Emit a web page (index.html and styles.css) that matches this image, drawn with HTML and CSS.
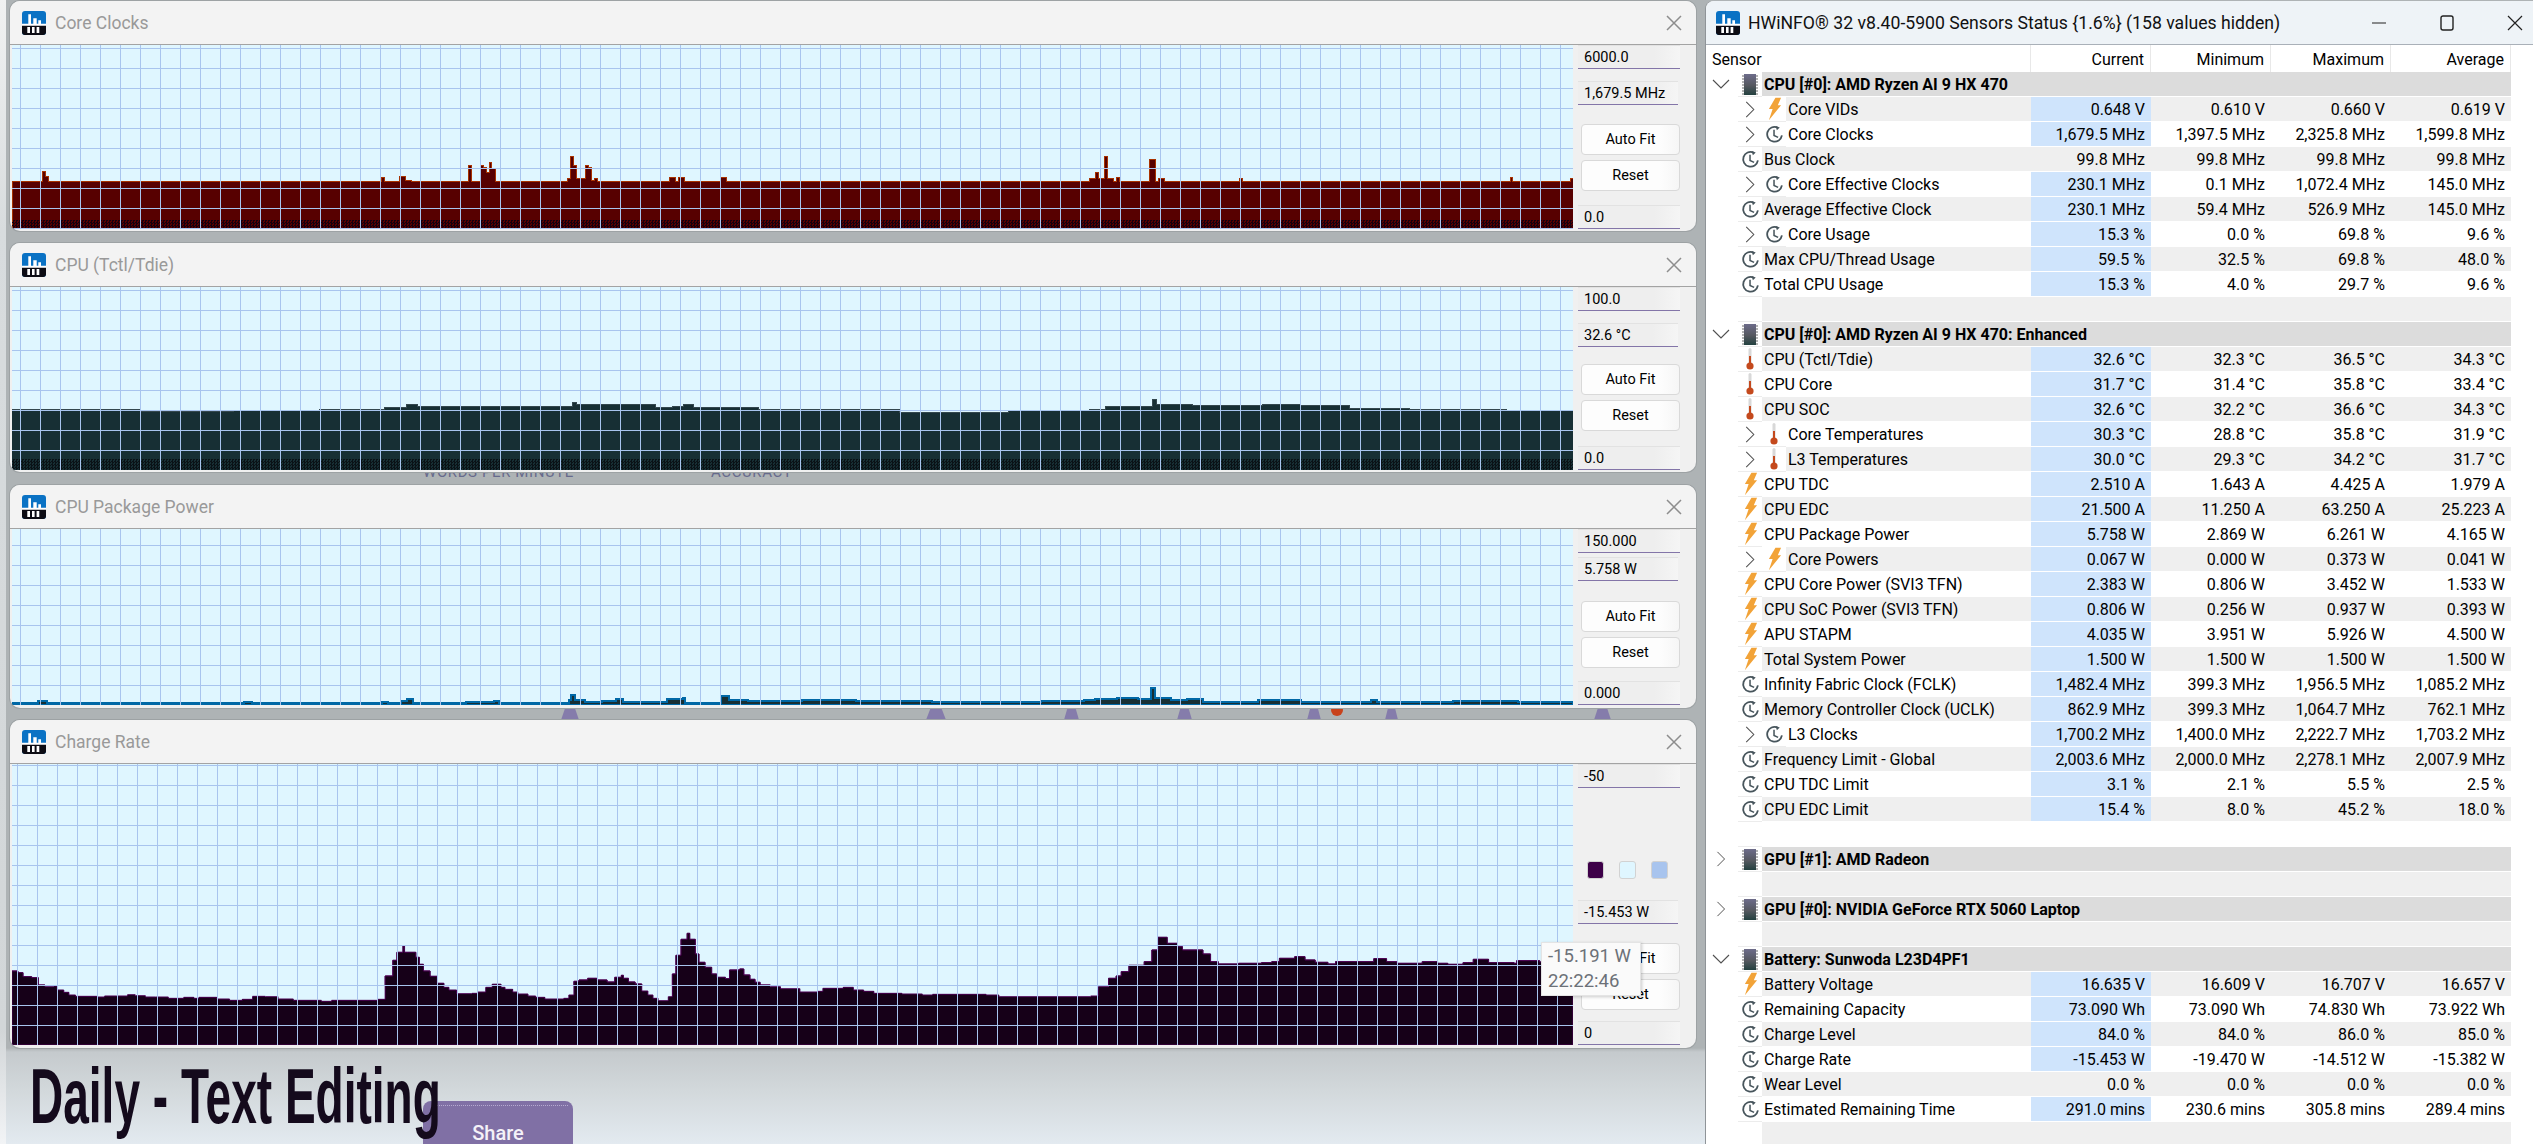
FILE: index.html
```html
<!DOCTYPE html>
<html lang="en">
<head>
    <meta charset="UTF-8">
    <meta name="viewport" content="width=device-width, initial-scale=1.0">
    <title>HWiNFO Sensors Status</title>
    <link rel="stylesheet" href="styles.css">
</head>
<body>
    <svg class="defs" width="0" height="0">
        <symbol id="logo" viewBox="0 0 24 24">
            <rect width="24" height="24" rx="3" fill="#0a72c4"/>
            <path d="M0 14h24v7a3 3 0 0 1-3 3H3a3 3 0 0 1-3-3z" fill="#0c0c14"/>
            <path d="M6.3 3.3H9v9.7H6.3zM11.3 7.3h3.4V13h-3.4zM16.3 9.3H19V13h-2.7zM0 12.7h24v2H0z" fill="#fff"/>
            <path d="M5.3 16H8v6H5.3zM10 16h2.6v6H10zM14.6 16h2.7v6h-2.7z" fill="#fff"/>
        </symbol>
        <symbol id="clock" viewBox="0 0 20 20">
            <path d="M13.2 2.6A7.8 7.8 0 1 0 17.8 11" fill="none" stroke="#47555c" stroke-width="1.9"/>
            <path d="M11.2 1l4.3 1.6-3 3z" fill="#47555c"/>
            <path d="M9.5 5v6l4.3 2" fill="none" stroke="#47555c" stroke-width="1.6"/>
        </symbol>
        <symbol id="bolt" viewBox="0 0 16 24">
            <path d="M9 0h6l-3.5 8H15L2 24l4-12H2z" fill="#f2a338"/>
        </symbol>
        <symbol id="therm" viewBox="0 0 8 22">
            <rect x="2.5" y="0" width="3" height="16" rx="1.5" fill="#d8d8d8"/>
            <rect x="3" y="8" width="2" height="9" fill="#c4491d"/>
            <circle cx="4" cy="18" r="3.6" fill="#c4491d"/>
        </symbol>
        <symbol id="chip" viewBox="0 0 16 21">
            <linearGradient id="chip-fill" x1="0" y1="0" x2="0" y2="1">
                <stop offset="0" stop-color="#6d6c8a"/>
                <stop offset=".55" stop-color="#55585f"/>
                <stop offset="1" stop-color="#23403f"/>
            </linearGradient>
            <path d="M0 2h16M0 5h16M0 8h16M0 11h16M0 14h16M0 17h16M0 20h16" stroke="#9a9a9a" stroke-width="1.4"/>
            <rect x="2" y="0" width="12" height="21" fill="url(#chip-fill)"/>
        </symbol>
        <symbol id="down" viewBox="0 0 18 10">
            <path d="M1 1l8 8 8-8" fill="none" stroke="#505050" stroke-width="1.1"/>
        </symbol>
        <symbol id="right" viewBox="0 0 10 18">
            <path d="M1 1l8 8-8 8" fill="none" stroke="#505050" stroke-width="1.1"/>
        </symbol>
        <symbol id="close" viewBox="0 0 16 16">
            <path d="M1 1l14 14M15 1L1 15" fill="none" stroke="#8d8d8d" stroke-width="1.5"/>
        </symbol>
    </svg>

    <!-- what shows through behind the graph windows -->
    <span class="behind words">WORDS PER MINUTE</span>
    <span class="behind accuracy">ACCURACY</span>
    <i class="blob b1"></i><i class="blob b2"></i><i class="blob b3"></i><i class="blob b4"></i>
    <i class="blob b5"></i><i class="blob b6"></i><i class="blob b7"></i><i class="red-blob"></i>
    <div class="page-edge"></div>
    <div class="share">Share</div>
    <h1 class="page-title">Daily - Text Editing</h1>

    <section class="win win1">
        <header class="win-title">
            <svg class="logo"><use href="#logo"/></svg>
            <span>Core Clocks</span>
            <svg class="close"><use href="#close"/></svg>
        </header>
        <div class="win-body">
            <div class="chart">
                <svg viewBox="12 45 1561 184" preserveAspectRatio="none">
                    <path class="fill-clocks" d="M12 229V181H42V171H45V176H48V181H381V177H384V181H399V176H405V180H411V181H468V165H471V181H480V165H483V167H486V172H489V162H491V168H495V181H567V178H570V156H573V165H576V178H585V165H588V167H591V180H594V178H597V181H669V177H675V181H678V177H684V181H720V177H726V181H1089V178H1095V172H1098V178H1104V156H1107V178H1113V181H1116V177H1119V181H1149V159H1155V181H1158V178H1164V181H1239V178H1242V181H1510V177H1512V181H1570V178H1573V229Z"/>
                </svg>
                <div class="dither"></div>
                <div class="grid"></div>
            </div>
            <div class="side">
                <div class="field">6000.0</div>
                <div class="field value">1,679.5 MHz</div>
                <button class="btn fit">Auto Fit</button>
                <button class="btn reset">Reset</button>
                <div class="field low">0.0</div>
            </div>
        </div>
    </section>

    <section class="win win2">
        <header class="win-title">
            <svg class="logo"><use href="#logo"/></svg>
            <span>CPU (Tctl/Tdie)</span>
            <svg class="close"><use href="#close"/></svg>
        </header>
        <div class="win-body">
            <div class="chart">
                <svg viewBox="11 -324 1440 552" preserveAspectRatio="none">
                    <path class="fill-temp" d="M11 228V45H40V46H130V53H215V50H295V46H355V40H375V30H385V36H525V35H528V24H532V30H565V30H605V40H620V35H630V30H640V40H700V45H830V54H930V50H1005V47H1020V37H1060V35H1063V14H1067V30H1100V32H1165V30H1200V33H1245V42H1300V46H1390V50H1451V228Z"/>
                </svg>
                <div class="dither"></div>
                <div class="grid"></div>
            </div>
            <div class="side">
                <div class="field">100.0</div>
                <div class="field value">32.6 °C</div>
                <button class="btn fit">Auto Fit</button>
                <button class="btn reset">Reset</button>
                <div class="field low">0.0</div>
            </div>
        </div>
    </section>

    <section class="win win3">
        <header class="win-title">
            <svg class="logo"><use href="#logo"/></svg>
            <span>CPU Package Power</span>
            <svg class="close"><use href="#close"/></svg>
        </header>
        <div class="win-body">
            <div class="chart">
                <svg viewBox="11 402 1440 528" preserveAspectRatio="none">
                    <path class="fill-power" d="M11 930V925H35V919H43V925H225V921H232V925H352V920H358V925H370V918H375V912H381V925H430V921H456V919H460V925H525V915H527V900H530V915H540V922H555V918H568V913H575V920H615V912H630V908H632V925H665V904H672V915H690V918H740V916H760V915H790V918H860V920H930V920H960V918H1000V916H1010V912H1030V910H1050V912H1062V880H1065V908H1080V915H1095V913H1110V920H1160V915H1185V915H1200V920H1265V916H1270V922H1340V919H1400V920H1451V930Z"/>
                </svg>
                <div class="grid"></div>
            </div>
            <div class="side">
                <div class="field">150.000</div>
                <div class="field value">5.758 W</div>
                <button class="btn fit">Auto Fit</button>
                <button class="btn reset">Reset</button>
                <div class="field low">0.000</div>
            </div>
        </div>
    </section>

    <section class="win win4">
        <header class="win-title">
            <svg class="logo"><use href="#logo"/></svg>
            <span>Charge Rate</span>
            <svg class="close"><use href="#close"/></svg>
        </header>
        <div class="win-body">
            <div class="chart">
                <svg viewBox="23.5 -48 3060 843" preserveAspectRatio="none">
                    <clipPath id="peak-band"><rect x="0" y="0" width="3100" height="615"/></clipPath>
                    <path id="rate" class="fill-rate" d="M23.5 795V573H35V578H45V590H62V593H75V615H88V620H105V618H112V630H125V637H135V645H148V649H190V651H205V648H228V648H250V644H265V647H285V651H305V651H330V655H360V652H380V655H390V652H425V657H450V661H475V658H495V649H520V650H545V657H575V661H630V664H650V661H740V658H755V588H770V541H778V517H790V498H793V517H808V517H815V532H822V553H830V573H843V589H857V610H870V622H880V630H895V641H925V640H937V636H952V622H965V613H982V622H990V628H1005V636H1015V642H1035V648H1050V652H1068V657H1105V655H1115V645H1125V604H1135V600H1152V595H1170V600H1190V606H1205V592H1218V586H1222V595H1232V606H1245V612H1258V633H1270V645H1280V655H1290V662H1310V650H1318V582H1325V526H1335V478H1347V460H1352V478H1363V522H1370V547H1382V562H1395V582H1405V592H1422V596H1430V570H1450V567H1458V585H1470V598H1480V607H1490V615H1510V620H1530V626H1568V636H1603V634H1613V625H1638V625H1653V622H1673V630H1693V634H1713V640H1768V642H1808V645H1828V643H1933V645H1958V650H2138V648H2153V620H2173V595H2188V588H2198V575H2213V556H2243V545H2258V510H2270V472H2288V490H2308V500H2318V510H2358V522H2373V545H2388V552H2428V550H2473V548H2493V545H2508V535H2538V530H2558V540H2578V547H2603V552H2618V545H2658V545H2693V536H2718V545H2738V550H2788V545H2818V550H2838V553H2868V548H2888V538H2918V548H2968V550H2973V542H3018V546H3083.5V795Z"/>
                    <use href="#rate" class="band" clip-path="url(#peak-band)"/>
                </svg>
                <div class="grid"></div>
            </div>
            <div class="side">
                <div class="field">-50</div>
                <div class="swatches">
                    <i class="swatch s-line"></i>
                    <i class="swatch s-back"></i>
                    <i class="swatch s-grid"></i>
                </div>
                <div class="field value">-15.453 W</div>
                <button class="btn fit">Auto Fit</button>
                <button class="btn reset">Reset</button>
                <div class="field low">0</div>
            </div>
        </div>
    </section>

    <div class="tooltip">-15.191 W<br>22:22:46</div>

    <section class="sensors">
        <header class="sensors-title">
            <svg class="logo"><use href="#logo"/></svg>
            <span>HWiNFO® 32 v8.40-5900 Sensors Status {1.6%} (158 values hidden)</span>
            <div class="controls">
                <svg width="16" height="16" viewBox="0 0 16 16"><path d="M1 8h14" stroke="#222" stroke-width="1.2"/></svg>
                <svg width="16" height="16" viewBox="0 0 16 16"><rect x="2" y="1" width="12" height="14" rx="2" fill="none" stroke="#222" stroke-width="1.4"/></svg>
                <svg width="16" height="16" viewBox="0 0 16 16"><path d="M1 1l14 14M15 1L1 15" stroke="#222" stroke-width="1.2"/></svg>
            </div>
        </header>
        <div class="head">
            <div class="head-name">Sensor</div>
            <div class="head-col">Current</div>
            <div class="head-col">Minimum</div>
            <div class="head-col">Maximum</div>
            <div class="head-col">Average</div>
        </div>

        <div class="sec">
            <div class="group"><svg class="tw"><use href="#down"/></svg><div class="ico"><svg class="i-chip"><use href="#chip"/></svg></div><div class="gname">CPU [#0]: AMD Ryzen AI 9 HX 470</div></div>
            <div class="row"><div class="ico"><svg class="i-right"><use href="#right"/></svg></div><div class="ico"><svg class="i-bolt"><use href="#bolt"/></svg></div><div class="name">Core VIDs</div><div class="cur">0.648 V</div><div class="val">0.610 V</div><div class="val">0.660 V</div><div class="val">0.619 V</div></div>
            <div class="row"><div class="ico"><svg class="i-right"><use href="#right"/></svg></div><div class="ico"><svg class="i-clock"><use href="#clock"/></svg></div><div class="name">Core Clocks</div><div class="cur">1,679.5 MHz</div><div class="val">1,397.5 MHz</div><div class="val">2,325.8 MHz</div><div class="val">1,599.8 MHz</div></div>
            <div class="row"><div class="ico"><svg class="i-clock"><use href="#clock"/></svg></div><div class="name">Bus Clock</div><div class="val">99.8 MHz</div><div class="val">99.8 MHz</div><div class="val">99.8 MHz</div><div class="val">99.8 MHz</div></div>
            <div class="row"><div class="ico"><svg class="i-right"><use href="#right"/></svg></div><div class="ico"><svg class="i-clock"><use href="#clock"/></svg></div><div class="name">Core Effective Clocks</div><div class="cur">230.1 MHz</div><div class="val">0.1 MHz</div><div class="val">1,072.4 MHz</div><div class="val">145.0 MHz</div></div>
            <div class="row"><div class="ico"><svg class="i-clock"><use href="#clock"/></svg></div><div class="name">Average Effective Clock</div><div class="cur">230.1 MHz</div><div class="val">59.4 MHz</div><div class="val">526.9 MHz</div><div class="val">145.0 MHz</div></div>
            <div class="row"><div class="ico"><svg class="i-right"><use href="#right"/></svg></div><div class="ico"><svg class="i-clock"><use href="#clock"/></svg></div><div class="name">Core Usage</div><div class="cur">15.3 %</div><div class="val">0.0 %</div><div class="val">69.8 %</div><div class="val">9.6 %</div></div>
            <div class="row"><div class="ico"><svg class="i-clock"><use href="#clock"/></svg></div><div class="name">Max CPU/Thread Usage</div><div class="cur">59.5 %</div><div class="val">32.5 %</div><div class="val">69.8 %</div><div class="val">48.0 %</div></div>
            <div class="row"><div class="ico"><svg class="i-clock"><use href="#clock"/></svg></div><div class="name">Total CPU Usage</div><div class="cur">15.3 %</div><div class="val">4.0 %</div><div class="val">29.7 %</div><div class="val">9.6 %</div></div>
            <div class="row"><div class="ico"></div><div class="name"></div></div>
        </div>

        <div class="sec">
            <div class="group"><svg class="tw"><use href="#down"/></svg><div class="ico"><svg class="i-chip"><use href="#chip"/></svg></div><div class="gname">CPU [#0]: AMD Ryzen AI 9 HX 470: Enhanced</div></div>
            <div class="row"><div class="ico"><svg class="i-therm"><use href="#therm"/></svg></div><div class="name">CPU (Tctl/Tdie)</div><div class="cur">32.6 °C</div><div class="val">32.3 °C</div><div class="val">36.5 °C</div><div class="val">34.3 °C</div></div>
            <div class="row"><div class="ico"><svg class="i-therm"><use href="#therm"/></svg></div><div class="name">CPU Core</div><div class="cur">31.7 °C</div><div class="val">31.4 °C</div><div class="val">35.8 °C</div><div class="val">33.4 °C</div></div>
            <div class="row"><div class="ico"><svg class="i-therm"><use href="#therm"/></svg></div><div class="name">CPU SOC</div><div class="cur">32.6 °C</div><div class="val">32.2 °C</div><div class="val">36.6 °C</div><div class="val">34.3 °C</div></div>
            <div class="row"><div class="ico"><svg class="i-right"><use href="#right"/></svg></div><div class="ico"><svg class="i-therm"><use href="#therm"/></svg></div><div class="name">Core Temperatures</div><div class="cur">30.3 °C</div><div class="val">28.8 °C</div><div class="val">35.8 °C</div><div class="val">31.9 °C</div></div>
            <div class="row"><div class="ico"><svg class="i-right"><use href="#right"/></svg></div><div class="ico"><svg class="i-therm"><use href="#therm"/></svg></div><div class="name">L3 Temperatures</div><div class="cur">30.0 °C</div><div class="val">29.3 °C</div><div class="val">34.2 °C</div><div class="val">31.7 °C</div></div>
            <div class="row"><div class="ico"><svg class="i-bolt"><use href="#bolt"/></svg></div><div class="name">CPU TDC</div><div class="cur">2.510 A</div><div class="val">1.643 A</div><div class="val">4.425 A</div><div class="val">1.979 A</div></div>
            <div class="row"><div class="ico"><svg class="i-bolt"><use href="#bolt"/></svg></div><div class="name">CPU EDC</div><div class="cur">21.500 A</div><div class="val">11.250 A</div><div class="val">63.250 A</div><div class="val">25.223 A</div></div>
            <div class="row"><div class="ico"><svg class="i-bolt"><use href="#bolt"/></svg></div><div class="name">CPU Package Power</div><div class="cur">5.758 W</div><div class="val">2.869 W</div><div class="val">6.261 W</div><div class="val">4.165 W</div></div>
            <div class="row"><div class="ico"><svg class="i-right"><use href="#right"/></svg></div><div class="ico"><svg class="i-bolt"><use href="#bolt"/></svg></div><div class="name">Core Powers</div><div class="cur">0.067 W</div><div class="val">0.000 W</div><div class="val">0.373 W</div><div class="val">0.041 W</div></div>
            <div class="row"><div class="ico"><svg class="i-bolt"><use href="#bolt"/></svg></div><div class="name">CPU Core Power (SVI3 TFN)</div><div class="cur">2.383 W</div><div class="val">0.806 W</div><div class="val">3.452 W</div><div class="val">1.533 W</div></div>
            <div class="row"><div class="ico"><svg class="i-bolt"><use href="#bolt"/></svg></div><div class="name">CPU SoC Power (SVI3 TFN)</div><div class="cur">0.806 W</div><div class="val">0.256 W</div><div class="val">0.937 W</div><div class="val">0.393 W</div></div>
            <div class="row"><div class="ico"><svg class="i-bolt"><use href="#bolt"/></svg></div><div class="name">APU STAPM</div><div class="cur">4.035 W</div><div class="val">3.951 W</div><div class="val">5.926 W</div><div class="val">4.500 W</div></div>
            <div class="row"><div class="ico"><svg class="i-bolt"><use href="#bolt"/></svg></div><div class="name">Total System Power</div><div class="cur">1.500 W</div><div class="val">1.500 W</div><div class="val">1.500 W</div><div class="val">1.500 W</div></div>
            <div class="row"><div class="ico"><svg class="i-clock"><use href="#clock"/></svg></div><div class="name">Infinity Fabric Clock (FCLK)</div><div class="cur">1,482.4 MHz</div><div class="val">399.3 MHz</div><div class="val">1,956.5 MHz</div><div class="val">1,085.2 MHz</div></div>
            <div class="row"><div class="ico"><svg class="i-clock"><use href="#clock"/></svg></div><div class="name">Memory Controller Clock (UCLK)</div><div class="cur">862.9 MHz</div><div class="val">399.3 MHz</div><div class="val">1,064.7 MHz</div><div class="val">762.1 MHz</div></div>
            <div class="row"><div class="ico"><svg class="i-right"><use href="#right"/></svg></div><div class="ico"><svg class="i-clock"><use href="#clock"/></svg></div><div class="name">L3 Clocks</div><div class="cur">1,700.2 MHz</div><div class="val">1,400.0 MHz</div><div class="val">2,222.7 MHz</div><div class="val">1,703.2 MHz</div></div>
            <div class="row"><div class="ico"><svg class="i-clock"><use href="#clock"/></svg></div><div class="name">Frequency Limit - Global</div><div class="cur">2,003.6 MHz</div><div class="val">2,000.0 MHz</div><div class="val">2,278.1 MHz</div><div class="val">2,007.9 MHz</div></div>
            <div class="row"><div class="ico"><svg class="i-clock"><use href="#clock"/></svg></div><div class="name">CPU TDC Limit</div><div class="cur">3.1 %</div><div class="val">2.1 %</div><div class="val">5.5 %</div><div class="val">2.5 %</div></div>
            <div class="row"><div class="ico"><svg class="i-clock"><use href="#clock"/></svg></div><div class="name">CPU EDC Limit</div><div class="cur">15.4 %</div><div class="val">8.0 %</div><div class="val">45.2 %</div><div class="val">18.0 %</div></div>
            <div class="row"><div class="ico"></div><div class="name"></div></div>
        </div>

        <div class="sec">
            <div class="group"><svg class="tw"><use href="#right"/></svg><div class="ico"><svg class="i-chip"><use href="#chip"/></svg></div><div class="gname">GPU [#1]: AMD Radeon</div></div>
            <div class="row"><div class="ico"></div><div class="name"></div></div>
        </div>

        <div class="sec">
            <div class="group"><svg class="tw"><use href="#right"/></svg><div class="ico"><svg class="i-chip"><use href="#chip"/></svg></div><div class="gname">GPU [#0]: NVIDIA GeForce RTX 5060 Laptop</div></div>
            <div class="row"><div class="ico"></div><div class="name"></div></div>
        </div>

        <div class="sec">
            <div class="group"><svg class="tw"><use href="#down"/></svg><div class="ico"><svg class="i-chip"><use href="#chip"/></svg></div><div class="gname">Battery: Sunwoda L23D4PF1</div></div>
            <div class="row"><div class="ico"><svg class="i-bolt"><use href="#bolt"/></svg></div><div class="name">Battery Voltage</div><div class="cur">16.635 V</div><div class="val">16.609 V</div><div class="val">16.707 V</div><div class="val">16.657 V</div></div>
            <div class="row"><div class="ico"><svg class="i-clock"><use href="#clock"/></svg></div><div class="name">Remaining Capacity</div><div class="cur">73.090 Wh</div><div class="val">73.090 Wh</div><div class="val">74.830 Wh</div><div class="val">73.922 Wh</div></div>
            <div class="row"><div class="ico"><svg class="i-clock"><use href="#clock"/></svg></div><div class="name">Charge Level</div><div class="cur">84.0 %</div><div class="val">84.0 %</div><div class="val">86.0 %</div><div class="val">85.0 %</div></div>
            <div class="row"><div class="ico"><svg class="i-clock"><use href="#clock"/></svg></div><div class="name">Charge Rate</div><div class="cur">-15.453 W</div><div class="val">-19.470 W</div><div class="val">-14.512 W</div><div class="val">-15.382 W</div></div>
            <div class="row"><div class="ico"><svg class="i-clock"><use href="#clock"/></svg></div><div class="name">Wear Level</div><div class="val">0.0 %</div><div class="val">0.0 %</div><div class="val">0.0 %</div><div class="val">0.0 %</div></div>
            <div class="row"><div class="ico"><svg class="i-clock"><use href="#clock"/></svg></div><div class="name">Estimated Remaining Time</div><div class="cur">291.0 mins</div><div class="val">230.6 mins</div><div class="val">305.8 mins</div><div class="val">289.4 mins</div></div>
            <div class="row"><div class="ico"></div><div class="name"></div></div>
        </div>
    </section>
</body>
</html>
```
FILE: styles.css
```css
* {
    box-sizing: border-box;
}

html, body {
    margin: 0;
    height: 1144px;
    overflow: hidden;
}

body {
    position: relative;
    font-family: Roboto, sans-serif;
    font-size: 16px;
    color: #000;
    background: linear-gradient(#aeb3b5 0, #aeb3b5 1048px, #c5cacd 1052px, #d2d8db 1090px, #e3eaf0 1144px);
}

.defs {
    position: absolute;
}

/* desktop behind the windows */
.page-edge {
    position: absolute;
    left: 0;
    top: 0;
    width: 6px;
    height: 1144px;
    background: linear-gradient(#f1f2f2, #d8dcde 20%, #d2d6d8 90%, #f2f4f6);
}

.behind {
    position: absolute;
    top: 464px;
    font-size: 15px;
    line-height: 16px;
    letter-spacing: 0.6px;
    color: #676a8c;
}

.words {
    left: 423px;
}

.accuracy {
    left: 711px;
}

.blob {
    position: absolute;
    top: 707px;
    height: 13px;
    background: #857cab;
    clip-path: polygon(25% 0, 75% 0, 100% 100%, 0 100%);
}

.b1 { left: 561px; width: 18px; }
.b2 { left: 926px; width: 20px; }
.b3 { left: 1064px; width: 15px; }
.b4 { left: 1177px; width: 15px; }
.b5 { left: 1307px; width: 14px; }
.b6 { left: 1385px; width: 13px; }
.b7 { left: 1594px; width: 17px; }

.red-blob {
    position: absolute;
    left: 1331px;
    top: 704px;
    width: 12px;
    height: 12px;
    border-radius: 50%;
    background: #c8421c;
}

.page-title {
    position: absolute;
    left: 30px;
    top: 1050px;
    margin: 0;
    font-family: "Liberation Sans", sans-serif;
    font-size: 78px;
    font-weight: 700;
    line-height: 92px;
    color: #140a1c;
    white-space: nowrap;
    transform: scaleX(0.59);
    transform-origin: left top;
}

.share {
    position: absolute;
    left: 423px;
    top: 1101px;
    width: 150px;
    height: 60px;
    padding-top: 20px;
    border-radius: 8px 8px 0 0;
    background: #8070a5;
    color: #f4f2f8;
    font-size: 20px;
    font-weight: 500;
    text-align: center;
}

.share::before {
    content: "";
    position: absolute;
    left: 12px;
    right: 5px;
    top: 4px;
    border-top: 1px dotted #b5abd0;
}

/* graph windows */
.win {
    position: absolute;
    left: 10px;
    width: 1686px;
    display: flex;
    flex-direction: column;
    background: #f0f0f0;
    border-radius: 10px;
    box-shadow: 0 0 0 1px #9da2a4;
    overflow: hidden;
}

.win1 { top: 1px; height: 230px; padding-bottom: 2px; }
.win2 { top: 243px; height: 229px; padding-bottom: 2px; }
.win3 { top: 485px; height: 223px; padding-bottom: 3px; }
.win4 { top: 720px; height: 328px; padding-bottom: 3px; }

.win-title {
    flex: 0 0 44px;
    display: flex;
    align-items: center;
    gap: 9px;
    padding: 0 14px 0 12px;
    background: #f3f3f3;
    border-bottom: 1px solid #a3a3a3;
    color: #999;
    font-size: 17.5px;
}

.logo {
    flex: none;
    width: 24px;
    height: 24px;
}

.close {
    width: 16px;
    height: 16px;
    margin-left: auto;
}

.win-body {
    flex: 1;
    min-height: 0;
    display: flex;
    padding-left: 2px;
    padding-right: 16px;
}

.chart {
    position: relative;
    flex: 1;
    overflow: hidden;
    background: #dff6ff;
}

.chart svg {
    position: absolute;
    inset: 0;
    width: 100%;
    height: 100%;
    shape-rendering: crispEdges;
}

.chart path, .chart use {
    vector-effect: non-scaling-stroke;
}

.fill-clocks { fill: #570000; stroke: #a83200; stroke-width: 1; }
.fill-temp { fill: #172f34; stroke: #34474e; stroke-width: 1; }
.fill-power { fill: #172f34; stroke: #0068a6; stroke-width: 2; }
.fill-rate { fill: #160018; stroke: #4a0050; stroke-width: 1; }

.chart .band {
    fill: #29092f;
    stroke: #4a0050;
}

.dither {
    position: absolute;
    left: 0;
    right: 0;
    bottom: 0;
    height: 9px;
    background-image: repeating-conic-gradient(#14000f 0 25%, transparent 0 50%);
    background-size: 3px 3px;
}

.win2 .dither {
    height: 11px;
    background-image: repeating-conic-gradient(#0a1216 0 25%, transparent 0 50%);
}

.grid {
    position: absolute;
    inset: 0;
    background-image: linear-gradient(90deg, #a8c4ee 1px, transparent 1px), linear-gradient(#a8c4ee 1px, transparent 1px);
    background-size: 20px 20px;
}

.win1 .grid { background-position: 8px 3px; }
.win2 .grid { background-position: 8px 3px; }
.win3 .grid { background-position: 8px 16px; }
.win4 .grid { background-position: 5px 1px; }

.side {
    flex: 0 0 102px;
    margin-left: 5px;
    display: flex;
    flex-direction: column;
    align-items: flex-start;
}

.field {
    flex: none;
    width: 102px;
    height: 24px;
    padding-left: 6px;
    line-height: 23px;
    font-size: 14.5px;
    background: linear-gradient(90deg, #eeeeee 75%, #f5f5f5);
    border-top: 1px solid #e2e2e2;
    border-bottom: 1px solid #8375a8;
}

.value {
    width: 100px;
}

.low {
    margin-top: auto;
}

.btn {
    flex: none;
    width: 99px;
    height: 31px;
    margin-left: 3px;
    padding: 0;
    font-family: inherit;
    font-size: 14.5px;
    color: #000;
    background: linear-gradient(90deg, #fdfdfd 80%, #f6f6f6);
    border: 1px solid #d9d9d9;
    border-radius: 4px;
}

.reset {
    margin-top: 5px;
}

.win1 .value { margin-top: 12px; }
.win1 .fit { margin-top: 19px; }
.win2 .value { margin-top: 12px; }
.win2 .fit { margin-top: 17px; }
.win3 .value { margin-top: 4px; }
.win3 .fit { margin-top: 20px; }
.win4 .value { margin-top: 21px; }
.win4 .fit { margin-top: 19px; }

.swatches {
    display: flex;
    gap: 15px;
    margin-top: 73px;
    margin-left: 9px;
}

.swatch {
    width: 17px;
    height: 18px;
    border: 1px solid #d2d2d2;
    border-radius: 3px;
}

.s-line { background: #3d0048; }
.s-back { background: #dff6ff; }
.s-grid { background: #a8c4ee; }

.tooltip {
    position: absolute;
    left: 1541px;
    top: 942px;
    width: 100px;
    height: 54px;
    padding: 1px 0 0 6px;
    font-size: 18.5px;
    line-height: 25px;
    color: #6c7178;
    background: #fafafa;
    border: 1px solid #e4e4e4;
    box-shadow: 1px 1px 3px rgba(0, 0, 0, 0.2);
}

/* sensors window */
.sensors {
    position: absolute;
    left: 1706px;
    top: 1px;
    width: 827px;
    height: 1143px;
    background: #fff;
    box-shadow: -1px 0 0 #8f9498;
    border-top-left-radius: 8px;
    overflow: hidden;
}

.sensors-title {
    height: 44px;
    display: flex;
    align-items: center;
    gap: 8px;
    padding-left: 10px;
    background: #eef3f7;
    border-bottom: 1px solid #a9b0b8;
    font-size: 17.65px;
    color: #111;
}

.controls {
    margin-left: auto;
    display: flex;
    gap: 52px;
    padding-right: 10px;
}

.head {
    height: 27px;
    display: flex;
    line-height: 29px;
}

.head-name {
    width: 325px;
    padding-left: 6px;
    border-right: 1px solid #e8e8e8;
}

.head-col {
    width: 120px;
    padding-right: 6px;
    text-align: right;
    border-right: 1px solid #e8e8e8;
}

.sec {
    width: 773px;
    margin-left: 32px;
}

.group, .row {
    height: 25px;
    display: flex;
    background-clip: padding-box;
    border-bottom: 1px solid #fff;
    line-height: 26px;
    white-space: nowrap;
}

.group {
    position: relative;
    background-color: #dcdcdc;
    font-weight: 700;
}

.row:nth-child(even) {
    background-color: #efefef;
}

.tw {
    position: absolute;
    left: -26px;
    top: 4px;
    width: 18px;
    height: 16px;
}

.ico {
    flex: 0 0 24px;
    height: 24px;
    display: flex;
    align-items: center;
    justify-content: center;
    background: #fff;
    box-shadow: 0 1px 0 #ececec;
}

.i-clock { width: 19px; height: 19px; }
.i-bolt { width: 15px; height: 24px; }
.i-therm { width: 8px; height: 22px; }
.i-chip { width: 16px; height: 21px; }
.i-right { width: 10px; height: 17px; }

.name, .gname {
    flex: 1;
    padding-left: 2px;
}

.cur, .val {
    flex: 0 0 120px;
    height: 24px;
    padding-right: 6px;
    text-align: right;
}

.cur {
    background: #cfe4fc;
}
```
